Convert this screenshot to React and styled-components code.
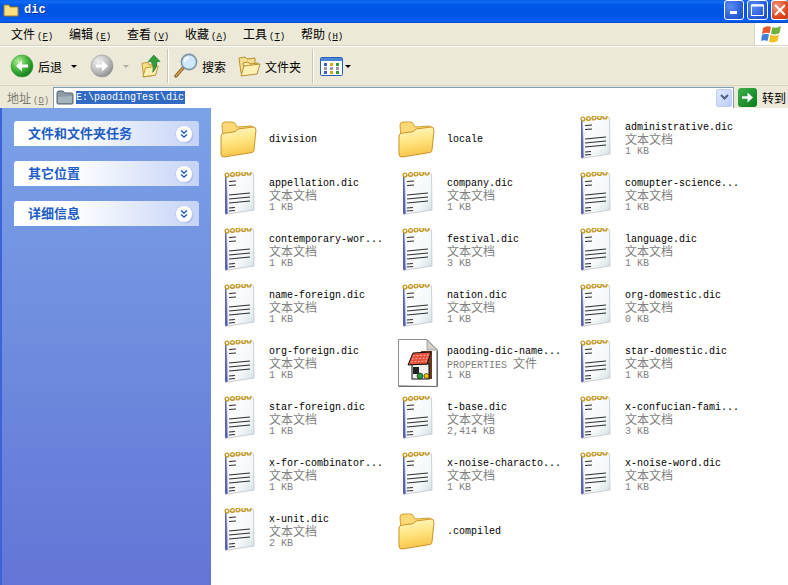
import styled, { createGlobalStyle } from "styled-components";

const Global = createGlobalStyle`
  html, body { margin: 0; padding: 0; background: #fff; overflow: hidden; }
  * { box-sizing: border-box; }
`;

const CJK = `"Noto Sans CJK SC", sans-serif`;

const Win = styled.div`
  width: 788px;
  height: 585px;
  display: flex;
  flex-direction: column;
  overflow: hidden;
  font-family: ${CJK};
  font-size: 12px;
  color: #000;
`;

const TitleBar = styled.div`
  height: 23px;
  flex: none;
  display: flex;
  align-items: flex-start;
  background: linear-gradient(180deg, #0a5fe8 0%, #0f6cf6 8%, #0058e6 22%, #0054e3 50%, #0258ec 78%, #0561f8 90%, #0046c4 100%);
`;

const TitleIcon = styled.div`
  width: 16px;
  height: 16px;
  margin: 2px 0 0 3px;
`;

const TitleText = styled.div`
  margin: 1px 0 0 5px;
  flex: 1;
  font: bold 12px/18px "Liberation Mono", monospace;
  color: #fff;
  text-shadow: 1px 1px 0 #0a2f9e;
`;

const Caption = styled.div`
  display: flex;
  gap: 3px;
`;

const CapBtn = styled.div`
  width: ${(p) => p.$w || 20}px;
  height: 20px;
  border: 1px solid #fff;
  border-right-width: ${(p) => (p.$cut ? 0 : 1)}px;
  border-radius: 3px;
  background: ${(p) =>
    p.$close
      ? "radial-gradient(circle at 30% 30%, #f09a80, #e0491f 60%, #c9330e)"
      : "radial-gradient(circle at 30% 30%, #5c8cf0, #2a5fdc 60%, #1c48c4)"};
  display: flex;
  align-items: center;
  justify-content: center;
`;

const MenuBar = styled.div`
  height: 23px;
  flex: none;
  display: flex;
  align-items: stretch;
  background: #ece9d8;
  border-bottom: 1px solid #d8d4c2;
`;

const Menus = styled.div`
  flex: 1;
  display: flex;
  padding-left: 11px;
  align-items: center;
`;

const MenuItem = styled.div`
  width: 58px;
  white-space: nowrap;
  line-height: 16px;
`;

const Key = styled.span`
  font: 9px "Liberation Mono", monospace;
  margin-left: 2px;
`;

const LogoBox = styled.div`
  width: 34px;
  background: #fff;
  border-left: 1px solid #d8d4c2;
  display: flex;
  align-items: center;
  justify-content: center;
`;

const Toolbar = styled.div`
  height: 40px;
  flex: none;
  display: flex;
  align-items: center;
  padding-left: 10px;
  background: #ece9d8;
  border-top: 1px solid #fff;
  border-bottom: 1px solid #d8d4c2;
`;

const ToolLabel = styled.span`
  margin-left: ${(p) => p.$ml || 4}px;
  white-space: nowrap;
`;

const Caret = styled.span`
  width: 0;
  height: 0;
  margin-left: ${(p) => p.$ml || 6}px;
  border-left: 3px solid transparent;
  border-right: 3px solid transparent;
  border-top: 3px solid ${(p) => (p.$off ? "#b0ad9e" : "#000")};
`;

const Sep = styled.span`
  width: 1px;
  height: 34px;
  background: #c9c6b4;
  box-shadow: 1px 0 0 #fff;
  margin-left: ${(p) => p.$ml}px;
`;

const Tool = styled.div`
  display: flex;
  flex: none;
  margin-left: ${(p) => p.$ml || 0}px;
`;

const AddressBar = styled.div`
  height: 22px;
  flex: none;
  display: flex;
  align-items: center;
  padding-left: 7px;
  background: #ece9d8;
`;

const AddrLabel = styled.div`
  width: 46px;
  color: #7d7b6f;
  white-space: nowrap;
`;

const AddrInput = styled.div`
  width: 681px;
  height: 22px;
  background: #fff;
  border: 1px solid #7f9db9;
  display: flex;
  align-items: center;
  padding-left: 2px;
  margin-top: 1px;
`;

const AddrText = styled.span`
  margin-left: 2px;
  background: #316ac5;
  color: #fff;
  font: 10px/13px "Liberation Mono", monospace;
  padding: 0 1px 0 0;
  flex: none;
`;

const Spring = styled.div`
  flex: 1;
`;

const DropBtn = styled.div`
  width: 16px;
  height: 18px;
  margin-right: 1px;
  border: 1px solid #bdcdf3;
  border-radius: 2px;
  background: linear-gradient(135deg, #e1eafe, #bccdf6);
  display: flex;
  align-items: center;
  justify-content: center;
`;

const Go = styled.div`
  display: flex;
  align-items: center;
  margin-left: 4px;
`;

const GoBtn = styled.div`
  width: 19px;
  height: 19px;
  border-radius: 3px;
  background: linear-gradient(135deg, #3eb04a, #0a7a1e);
  display: flex;
  align-items: center;
  justify-content: center;
`;

const Body = styled.div`
  flex: 1;
  display: flex;
  min-height: 0;
`;

const Sidebar = styled.div`
  width: 211px;
  flex: none;
  padding: 13px 12px 0 12px;
  border-left: 2px solid #3c63d8;
  background: linear-gradient(180deg, #7ba2e7 0%, #6375d6 100%);
  display: flex;
  flex-direction: column;
  gap: 15px;
`;

const PanelHead = styled.div`
  height: 25px;
  display: flex;
  align-items: center;
  justify-content: space-between;
  padding: 0 7px 0 14px;
  border-radius: 3px 3px 0 0;
  background: linear-gradient(90deg, #fff 0%, #fff 30%, #c6d3f7 100%);
  color: #215dc6;
  font-weight: 700;
  font-size: 13px;
`;

const PanelTitle = styled.span`
  margin-bottom: 2px;
`;

const Chevron = styled.div`
  width: 16px;
  height: 16px;
  border-radius: 50%;
  background: #fff;
  box-shadow: 0 0 0 1px #c3cfee, 1px 1px 1px #8ea3dc;
  display: flex;
  align-items: center;
  justify-content: center;
`;

const Files = styled.div`
  flex: 1;
  background: #fff;
  padding: 3px 0 0 7px;
  display: grid;
  grid-template-columns: repeat(3, 178px);
  grid-auto-rows: 56px;
  align-content: start;
`;

const Tile = styled.div`
  display: flex;
  align-items: center;
`;

const IconBox = styled.div`
  width: 48px;
  height: 48px;
  flex: none;
  display: flex;
  align-items: center;
  padding-left: ${(p) => p.$pad}px;
`;

const Info = styled.div`
  margin: 2px 0 0 3px;
  display: flex;
  flex-direction: column;
  white-space: nowrap;
`;

const Name = styled.div`
  font: 10px/12px "Liberation Mono", monospace;
  height: 12px;
  color: #000;
`;

const TypeLine = styled.div`
  font: 12px/9px ${CJK};
  height: 12px;
  color: #7f7f7f;
`;

const TypeLatin = styled.span`
  font: 10px/9px "Liberation Mono", monospace;
`;

const Size = styled.div`
  font: 10px/12px "Liberation Mono", monospace;
  height: 12px;
  color: #7f7f7f;
`;

function FolderIcon() {
  return (
    <svg width="38" height="38" viewBox="0 0 38 38">
      <defs>
        <linearGradient id="fd" x1="0" y1="0" x2="0.2" y2="1">
          <stop offset="0" stopColor="#fff8c8" />
          <stop offset="0.55" stopColor="#ffe47f" />
          <stop offset="1" stopColor="#f9c64c" />
        </linearGradient>
      </defs>
      <path d="M3 5 Q3 2 6 2 L13 2 Q16 2 17 5 L18 7 L32 6 Q35 6 35 9 L35 15 L5 30 Z" fill="#fcd976" stroke="#d1a02f" />
      <path d="M2 16 Q2 13 6 13 L14 12 Q17 12 19 9 L34 7 Q37 7 37 10 L35 30 Q35 32 33 32.5 L5 37 Q2 37 2 34 Z" fill="url(#fd)" stroke="#c9962a" />
    </svg>
  );
}

function NoteIcon() {
  return (
    <svg width="32" height="46" viewBox="0 3 32 46">
      <defs>
        <linearGradient id="nt" x1="0" y1="0" x2="1" y2="1">
          <stop offset="0" stopColor="#ffffff" />
          <stop offset="0.65" stopColor="#f4f8f9" />
          <stop offset="1" stopColor="#d3e0e2" />
        </linearGradient>
      </defs>
      <path d="M2 7 L4 7 L5 44 L4 45.5 Q2 45.5 2 44 Z" fill="#5a62b8" />
      <path d="M3.5 7 L29 4 Q30.5 4 30.5 6 L31 41 L5 45 Z" fill="url(#nt)" stroke="#b4bfc8" strokeWidth="0.7" />
      {[4, 9.5, 15, 20.5, 26].map((x) => (
        <circle key={x} cx={x} cy={6.4 - x * 0.09} r="1.9" fill="none" stroke="#c8991f" strokeWidth="1.3" />
      ))}
      <g stroke="#2f2f2f" strokeWidth="1.1">
        <path d="M6 12.5 L13 12" />
        <path d="M6 16.5 L13 16" />
        <path d="M6 26 L27 24" />
        <path d="M6 30 L27 28" />
        <path d="M6 34 L27 32" />
        <path d="M6 39 L12 38.5" />
        <path d="M6 42 L12 41.5" />
      </g>
    </svg>
  );
}

function PropsIcon() {
  return (
    <svg width="40" height="48" viewBox="0 0 40 48">
      <path d="M0.5 0.5 L29 0.5 L39.5 11 L39.5 47.5 L0.5 47.5 Z" fill="#fff" stroke="#8a8a8a" />
      <path d="M38.5 47 L38.5 12 L39.5 12 L39.5 47.5 L1 47.5 L1 46.5 Z" fill="#555" />
      <path d="M29 1 L29 11 L39 11 Z" fill="#d4d0c8" stroke="#888" strokeWidth="0.7" />
      <rect x="23" y="12" width="11" height="28" fill="#6a3a1a" />
      <rect x="14" y="25" width="17" height="15" fill="#f1f1ee" stroke="#111" />
      <path d="M10 26 L29 25 L33 13 L15 14 Z" fill="#e8503a" stroke="#111" />
      <path d="M15 17 L31 16 M14 20 L30 19 M13 23 L29 22" stroke="#ffb0a6" strokeDasharray="2 1.5" />
      <rect x="15" y="28" width="6" height="7" fill="#222" />
      <circle cx="22" cy="37" r="3" fill="#2a9a3a" stroke="#111" strokeWidth="0.6" />
      <circle cx="28.5" cy="37" r="2.5" fill="#f4c20d" stroke="#111" strokeWidth="0.6" />
    </svg>
  );
}

function RoundArrow({ off, flip }) {
  return (
    <svg width="24" height="24" viewBox="0 0 24 24">
      <defs>
        <radialGradient id="ga" cx="35%" cy="30%" r="75%">
          <stop offset="0" stopColor="#b8ee9a" />
          <stop offset="0.55" stopColor="#3fb23a" />
          <stop offset="1" stopColor="#16761c" />
        </radialGradient>
        <radialGradient id="gb" cx="35%" cy="30%" r="75%">
          <stop offset="0" stopColor="#f0f0f0" />
          <stop offset="0.6" stopColor="#bdbdbd" />
          <stop offset="1" stopColor="#8c8c8c" />
        </radialGradient>
      </defs>
      <circle cx="12" cy="12" r="11" fill={off ? "url(#gb)" : "url(#ga)"} stroke={off ? "#9a9a9a" : "#36a733"} strokeWidth="0.6" />
      <path
        d={flip ? "M6 10.5 H12 V6.5 L18 12 L12 17.5 V13.5 H6 Z" : "M18 10.5 H12 V6.5 L6 12 L12 17.5 V13.5 H18 Z"}
        fill="#fff"
      />
    </svg>
  );
}

function UpIcon() {
  return (
    <svg width="20" height="26" viewBox="0 0 22 26">
      <path d="M1 10 L8 9 L9 12 L17 11 L16 23 L3 25 Z" fill="#fbe08a" stroke="#b98f2c" />
      <path d="M2 25 L5 15 L19 13 L16 23 Z" fill="#fdf0b5" stroke="#b98f2c" />
      <path d="M14 1 L21 8 L17.5 8 Q18 15 13 20 Q14.5 13 11 8 L8 8 Z" fill="#2f9e34" stroke="#176b1d" strokeWidth="0.6" />
    </svg>
  );
}

function SearchIcon() {
  return (
    <svg width="24" height="26" viewBox="0 0 24 26">
      <path d="M9 15 L2 23" stroke="#8a5a20" strokeWidth="3.4" strokeLinecap="round" />
      <path d="M9 15 L2 23" stroke="#e0a860" strokeWidth="1.2" strokeLinecap="round" />
      <circle cx="15" cy="9" r="7.6" fill="#cfe8fb" stroke="#7e93a8" strokeWidth="1.6" />
      <path d="M10.5 9 Q11 5 15 4.5" stroke="#fff" strokeWidth="1.6" fill="none" />
    </svg>
  );
}

function FoldersIcon() {
  return (
    <svg width="23" height="22" viewBox="0 0 23 22">
      <path d="M1 3 L7 2 L9 4 L17 3 L17 16 L3 18 Z" fill="#f7dd8e" stroke="#b98f2c" />
      <path d="M5 8 L10 7 L12 9 L20 8 L20 10 L6 12 Z" fill="#fdeeb0" stroke="#b98f2c" />
      <path d="M3 21 L6 11 L22 9 L19 19 Z" fill="#fdf0b5" stroke="#b98f2c" />
    </svg>
  );
}

function ViewsIcon() {
  const cols = ["#3a62c8", "#d9a520", "#2f9e34"];
  return (
    <svg width="23" height="19" viewBox="0 0 23 19">
      <rect x="0.5" y="0.5" width="22" height="18" rx="1" fill="#fff" stroke="#2a5fb8" />
      <rect x="1" y="1" width="21" height="3" fill="#4c86d8" />
      {[0, 1, 2].map((r) =>
        cols.map((c, i) => (
          <rect key={`${r}${i}`} x={4 + i * 6} y={6 + r * 4} width="3" height="3" fill={r === 1 ? "#9a9ab0" : c} />
        ))
      )}
    </svg>
  );
}

function WinLogo() {
  return (
    <svg width="21" height="20" viewBox="0 0 21 20">
      <path d="M2 4 Q6 1 10 3 L8.5 9.5 Q5 8 1 10 Z" fill="#e8562a" />
      <path d="M11.5 3 Q15 5 20 2 L18.5 9 Q14 11.5 10 9.5 Z" fill="#6cb33f" />
      <path d="M1 11 Q4 9 8 10.5 L6.5 17 Q3 15.5 0 17 Z" fill="#3f7fd8" />
      <path d="M9.5 10.5 Q14 13 18 10.5 L16.5 17 Q12 19.5 8 17.5 Z" fill="#f5c022" />
    </svg>
  );
}

function ChevronIcon() {
  return (
    <svg width="10" height="10" viewBox="0 0 10 10" fill="none" stroke="#215dc6" strokeWidth="1.4">
      <path d="M2 1.5 L5 4 L8 1.5" />
      <path d="M2 5.5 L5 8 L8 5.5" />
    </svg>
  );
}

const menus = [
  ["文件", "F"],
  ["编辑", "E"],
  ["查看", "V"],
  ["收藏", "A"],
  ["工具", "T"],
  ["帮助", "H"],
];

const tasks = ["文件和文件夹任务", "其它位置", "详细信息"];

const TXT = "文本文档";
const files = [
  { name: "division", kind: "folder" },
  { name: "locale", kind: "folder" },
  { name: "administrative.dic", size: "1 KB" },
  { name: "appellation.dic", size: "1 KB" },
  { name: "company.dic", size: "1 KB" },
  { name: "comupter-science...", size: "1 KB" },
  { name: "contemporary-wor...", size: "1 KB" },
  { name: "festival.dic", size: "3 KB" },
  { name: "language.dic", size: "1 KB" },
  { name: "name-foreign.dic", size: "1 KB" },
  { name: "nation.dic", size: "1 KB" },
  { name: "org-domestic.dic", size: "0 KB" },
  { name: "org-foreign.dic", size: "1 KB" },
  { name: "paoding-dic-name...", size: "1 KB", kind: "props" },
  { name: "star-domestic.dic", size: "1 KB" },
  { name: "star-foreign.dic", size: "1 KB" },
  { name: "t-base.dic", size: "2,414 KB" },
  { name: "x-confucian-fami...", size: "3 KB" },
  { name: "x-for-combinator...", size: "1 KB" },
  { name: "x-noise-characto...", size: "1 KB" },
  { name: "x-noise-word.dic", size: "1 KB" },
  { name: "x-unit.dic", size: "2 KB" },
  { name: ".compiled", kind: "folder" },
];

function FileTile({ file }) {
  const isFolder = file.kind === "folder";
  const isProps = file.kind === "props";
  return (
    <Tile>
      <IconBox $pad={isFolder ? 1 : isProps ? 2 : 5}>
        {isFolder ? <FolderIcon /> : isProps ? <PropsIcon /> : <NoteIcon />}
      </IconBox>
      <Info>
        <Name>{file.name}</Name>
        {!isFolder && (
          <>
            <TypeLine>
              {isProps ? (
                <>
                  <TypeLatin>PROPERTIES </TypeLatin>文件
                </>
              ) : (
                TXT
              )}
            </TypeLine>
            <Size>{file.size}</Size>
          </>
        )}
      </Info>
    </Tile>
  );
}

export default function App() {
  return (
    <Win>
      <Global />
      <TitleBar>
        <TitleIcon>
          <svg width="16" height="16" viewBox="0 0 16 16">
            <path d="M1 3 L6 3 L7 5 L15 5 L15 14 L1 14 Z" fill="#fbdf85" stroke="#a67c1c" />
          </svg>
        </TitleIcon>
        <TitleText>dic</TitleText>
        <Caption>
          <CapBtn>
            <svg width="10" height="10" viewBox="0 0 10 10">
              <rect x="1" y="6" width="7" height="3" fill="#fff" />
            </svg>
          </CapBtn>
          <CapBtn $w={21}>
            <svg width="13" height="12" viewBox="0 0 13 12" fill="none">
              <rect x="0.5" y="1" width="12" height="10.5" stroke="#fff" />
              <rect x="0.5" y="0.5" width="12" height="2" fill="#fff" />
            </svg>
          </CapBtn>
          <CapBtn $w={17} $close $cut>
            <svg width="12" height="12" viewBox="0 0 12 12" stroke="#fff" strokeWidth="2">
              <path d="M1 1 L11 11 M11 1 L1 11" />
            </svg>
          </CapBtn>
        </Caption>
      </TitleBar>

      <MenuBar>
        <Menus>
          {menus.map(([label, key]) => (
            <MenuItem key={key}>
              {label}
              <Key>
                (<u>{key}</u>)
              </Key>
            </MenuItem>
          ))}
        </Menus>
        <LogoBox>
          <WinLogo />
        </LogoBox>
      </MenuBar>

      <Toolbar>
        <RoundArrow />
        <ToolLabel>后退</ToolLabel>
        <Caret $ml={9} />
        <Tool $ml={13}>
          <RoundArrow off flip />
        </Tool>
        <Caret $off $ml={9} />
        <Tool $ml={12}>
          <UpIcon />
        </Tool>
        <Sep $ml={6} />
        <Tool $ml={6}>
          <SearchIcon />
        </Tool>
        <ToolLabel $ml={4}>搜索</ToolLabel>
        <Tool $ml={12}>
          <FoldersIcon />
        </Tool>
        <ToolLabel $ml={4}>文件夹</ToolLabel>
        <Sep $ml={11} />
        <Tool $ml={7}>
          <ViewsIcon />
        </Tool>
        <Caret $ml={2} />
      </Toolbar>

      <AddressBar>
        <AddrLabel>
          地址
          <Key>
            (<u>D</u>)
          </Key>
        </AddrLabel>
        <AddrInput>
          <svg width="18" height="15" viewBox="0 0 18 15">
            <path d="M1 3 Q1 1 3 1 L7 1 L9 3 L16 3 Q17 3 17 5 L17 13 Q17 14 16 14 L2 14 Q1 14 1 13 Z" fill="#8b9aa5" stroke="#56636d" />
            <path d="M2 7 L16 6 L16 13 L2 13 Z" fill="#a6b4bd" />
          </svg>
          <AddrText>E:\paodingTest\dic</AddrText>
          <Spring />
          <DropBtn>
            <svg width="9" height="7" viewBox="0 0 9 7" fill="none" stroke="#4d6185" strokeWidth="2">
              <path d="M1 1 L4.5 4.5 L8 1" />
            </svg>
          </DropBtn>
        </AddrInput>
        <Go>
          <GoBtn>
            <svg width="13" height="13" viewBox="0 0 13 13">
              <path d="M1 5.2 H6.5 V1.5 L12 6.5 L6.5 11.5 V7.8 H1 Z" fill="#fff" />
            </svg>
          </GoBtn>
          <ToolLabel $ml={5}>转到</ToolLabel>
        </Go>
      </AddressBar>

      <Body>
        <Sidebar>
          {tasks.map((t) => (
            <PanelHead key={t}>
              <PanelTitle>{t}</PanelTitle>
              <Chevron>
                <ChevronIcon />
              </Chevron>
            </PanelHead>
          ))}
        </Sidebar>
        <Files>
          {files.map((f) => (
            <FileTile key={f.name} file={f} />
          ))}
        </Files>
      </Body>
    </Win>
  );
}
